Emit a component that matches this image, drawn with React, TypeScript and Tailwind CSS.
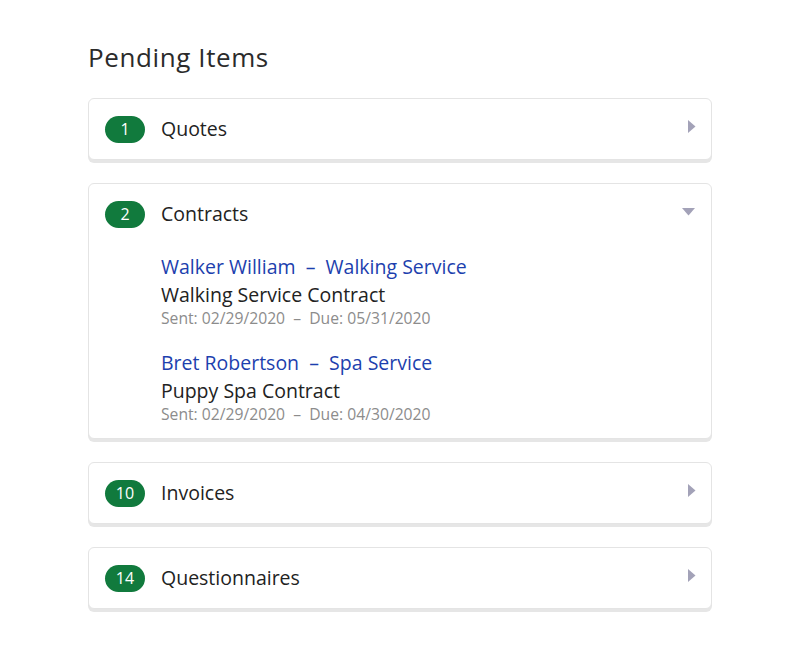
import React from "react"

interface ContractItem {
  client: string
  service: string
  title: string
  sent: string
  due: string
}

const contracts: ContractItem[] = [
  { client: "Walker William", service: "Walking Service", title: "Walking Service Contract", sent: "02/29/2020", due: "05/31/2020" },
  { client: "Bret Robertson", service: "Spa Service", title: "Puppy Spa Contract", sent: "02/29/2020", due: "04/30/2020" },
]

function Caret({ open }: { open: boolean }) {
  if (open) {
    return (
      <svg width="13" height="8" viewBox="0 0 13 8" className="block">
        <path d="M0 0 H13 L6.5 7.5 Z" fill="#a3a2b8" />
      </svg>
    )
  }
  return (
    <svg width="8" height="13" viewBox="0 0 8 13" className="block">
      <path d="M0 0 V13 L7.5 6.5 Z" fill="#a3a2b8" />
    </svg>
  )
}

function Section({ count, label, open = false, children }: { count: number; label: string; open?: boolean; children?: React.ReactNode }) {
  return (
    <div className="rounded-[6px] border border-[#e4e4e4] bg-white shadow-[0_3px_0_#e6e6e6]">
      <div className={`flex h-[60px] items-center pl-4 ${open ? "pr-4" : "pr-[15px]"}`}>
        <span className="flex h-[27px] w-[40px] items-center justify-center rounded-full bg-[#117a3d] text-[16px] text-white">
          {count}
        </span>
        <span className="ml-4 text-[19.5px] text-[#222]">{label}</span>
        <span className={`ml-auto ${open ? "-mt-[4px]" : "-mt-[6px]"}`}>
          <Caret open={open} />
        </span>
      </div>
      {children}
    </div>
  )
}

export default function App() {
  return (
    <div className="min-h-[650px] w-[800px] bg-white" style={{ fontFamily: '"Open Sans", "Noto Sans", sans-serif' }}>
      <div className="mx-auto w-[624px] pt-[37px]">
        <h1 className="text-[26px] leading-[40px] tracking-[0.6px] text-[#2b2b2b]">Pending Items</h1>

        <div className="mt-[21px] flex flex-col gap-[23px]">
          <Section count={1} label="Quotes" />

          <Section count={2} label="Contracts" open>
            <div className="flex flex-col gap-[22px] pb-[15px] pl-[72px] pt-[9px]">
              {contracts.map((c) => (
                <div key={c.client}>
                  <div className="text-[19.5px] leading-[28px] text-[#1d3fae]">
                    {c.client}&nbsp;&nbsp;–&nbsp;&nbsp;{c.service}
                  </div>
                  <div className="text-[19.5px] leading-[28px] text-[#222]">{c.title}</div>
                  <div className="text-[15.7px] leading-[18px] text-[#8c8c8c]">
                    Sent: {c.sent}&nbsp;&nbsp;–&nbsp;&nbsp;Due: {c.due}
                  </div>
                </div>
              ))}
            </div>
          </Section>

          <Section count={10} label="Invoices" />
          <Section count={14} label="Questionnaires" />
        </div>
      </div>
    </div>
  )
}
